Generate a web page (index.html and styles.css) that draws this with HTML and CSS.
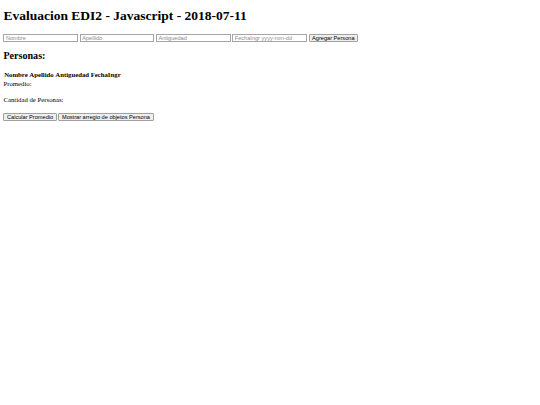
FILE: index.html
```html
<!DOCTYPE html>
<html>
<head>
<meta charset="utf-8">
<title>Evaluacion EDI2</title>
<link rel="stylesheet" href="styles.css">
</head>
<body class="page">
<h1 class="title">Evaluacion EDI2 - Javascript - 2018-07-11</h1>
<div class="form">
<input class="field" type="text" placeholder="Nombre">
<input class="field" type="text" placeholder="Apellido">
<input class="field" type="text" placeholder="Antiguedad">
<input class="field" type="text" placeholder="FechaIngr yyyy-mm-dd">
<button class="btn" type="button">Agregar Persona</button>
</div>
<h2 class="subtitle">Personas:</h2>
<table class="people">
<thead>
<tr><th class="head">Nombre</th><th class="head">Apellido</th><th class="head">Antiguedad</th><th class="head">FechaIngr</th></tr>
</thead>
<tbody></tbody>
</table>
<div class="line">Promedio: </div>
<p class="line gap">Cantidad de Personas: </p>
<div class="actions">
<button class="btn" type="button">Calcular Promedio</button>
<button class="btn" type="button">Mostrar arregio de objetos Persona</button>
</div>
</body>
</html>
```

FILE: styles.css
```css
html {
  background: #ffffff;
}
.page {
  margin: 0;
  padding: 0 3.4px;
  font-family: "Liberation Serif", "Times New Roman", serif;
  font-size: 6.75px;
  line-height: 7.75px;
  color: #000000;
}
.title {
  font-size: 13.5px;
  line-height: 15.5px;
  font-weight: bold;
  margin: 8.2px 0 9.8px;
}
.form {
  display: flex;
  align-items: center;
  gap: 1.7px;
  height: 9.3px;
}
.field {
  box-sizing: border-box;
  width: 74.6px;
  height: 8.6px;
  margin: 0;
  padding: 0 1.5px;
  border: 1px solid #a5a5a5;
  border-radius: 0;
  background: #ffffff;
  font-family: "Liberation Sans", Arial, sans-serif;
  font-size: 5.625px;
  color: #000000;
}
.field::placeholder {
  color: #8c8c8c;
}
.btn {
  box-sizing: border-box;
  height: 8.6px;
  margin: 0;
  padding: 0 2.6px;
  border: 1px solid #a0a0a0;
  border-radius: 1px;
  background: #efefef;
  font-family: "Liberation Sans", Arial, sans-serif;
  font-size: 5.625px;
  line-height: 6px;
  color: #000000;
}
.subtitle {
  font-size: 10.1px;
  line-height: 11.6px;
  font-weight: bold;
  margin: 7.6px 0 9px;
}
.people {
  border-spacing: 0.85px;
  border-collapse: separate;
}
.head {
  padding: 0.42px 0.8px;
  font-weight: bold;
  text-align: center;
}
.line {
  margin: 0;
}
.gap {
  margin: 8.6px 0 6.75px;
}
.actions {
  display: flex;
  gap: 1.7px;
  margin-top: 9.2px;
}
```
